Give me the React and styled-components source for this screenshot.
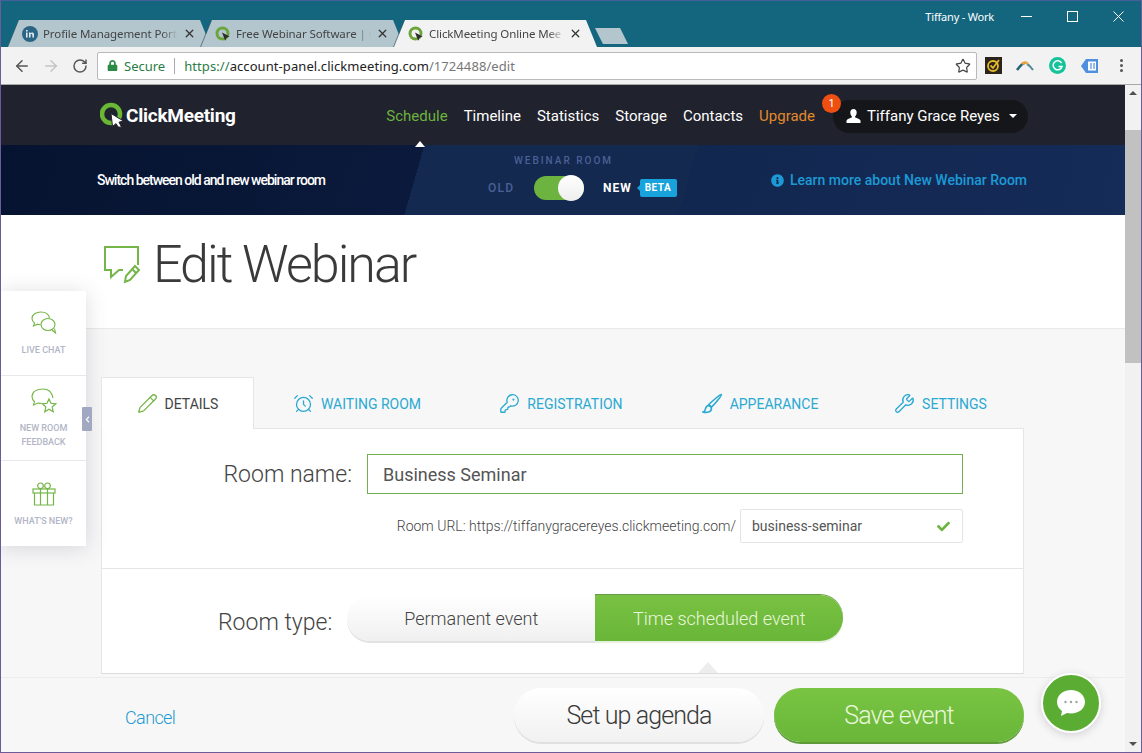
import styled, { createGlobalStyle } from 'styled-components';
import {
  Pencil,
  AlarmClock,
  KeyRound,
  Wrench,
  ArrowLeft,
  ArrowRight,
  RotateCw,
  Star,
  X,
} from 'lucide-react';
import { FaCheck, FaLock, FaInfoCircle, FaChevronLeft } from 'react-icons/fa';

const GlobalStyle = createGlobalStyle`
  html, body {
    margin: 0;
    padding: 0;
    background: #fff;
  }
  body {
    font-family: Roboto, "Liberation Sans", sans-serif;
  }
  * {
    box-sizing: border-box;
  }
`;

const BrushIcon = ({ size, color, strokeWidth }) => (
  <svg width={size} height={size} viewBox="0 0 20 20" fill="none" stroke={color} strokeWidth={strokeWidth}>
    <path d="M18.5 1.5c.8.8-7 9.5-9.5 12L6.5 11C9 8.5 17.7.7 18.5 1.5z" />
    <path d="M6 12c-2 0-2.5 2-3 4-.2 1-1.2 1.800-2 2 3 1 8 .5 8-3 0-1.500-1.500-3-3-3z" />
  </svg>
);

const TABS = [
  { id: 'linkedin', title: 'Profile Management Port' },
  { id: 'cm', title: 'Free Webinar Software | C' },
  { id: 'cm', title: 'ClickMeeting Online Mee', active: true },
];

const NAV = [
  { label: 'Schedule', color: '#6db33f' },
  { label: 'Timeline' },
  { label: 'Statistics' },
  { label: 'Storage' },
  { label: 'Contacts' },
  { label: 'Upgrade', color: '#e08a2c' },
];

const SECTIONS = [
  { label: 'DETAILS', icon: Pencil, width: 153, active: true },
  { label: 'WAITING ROOM', icon: AlarmClock, width: 206 },
  { label: 'REGISTRATION', icon: KeyRound, width: 202 },
  { label: 'APPEARANCE', icon: BrushIcon, width: 196 },
  { label: 'SETTINGS', icon: Wrench, width: 165 },
];

const CmFavicon = () => (
  <svg width="16" height="16" viewBox="0 0 16 16">
    <circle cx="7.5" cy="7.5" r="5.5" fill="none" stroke="#6ca53c" strokeWidth="3" />
    <path d="M7 6.5l7.5 4-3 1.2-1.2 3z" fill="#2c2c2c" />
  </svg>
);

const LinkedInFavicon = () => (
  <svg width="16" height="16" viewBox="0 0 16 16">
    <circle cx="8" cy="8" r="8" fill="#2c6485" />
    <rect x="4" y="6.5" width="1.6" height="5" fill="#dfe8ee" />
    <rect x="4" y="4" width="1.6" height="1.6" fill="#dfe8ee" />
    <path d="M7 6.5h1.5v.8c.8-1.2 3.5-1.3 3.5 1.2v3h-1.6V9c0-1.4-1.8-1.2-1.8 0v2.5H7z" fill="#dfe8ee" />
  </svg>
);

const LogoMark = () => (
  <svg width="25" height="27" viewBox="0 0 25 27">
    <circle cx="11" cy="12" r="9" fill="none" stroke="#69b735" strokeWidth="4.5" />
    <path d="M11 11.5l12.5 7.5-4.5 1.2 2.6 5-3.4-.2-2.2-3.400-3.500 2.800z" fill="#fff" stroke="#20222d" strokeWidth="1" />
  </svg>
);

const EditIcon = () => (
  <svg width="38" height="40" viewBox="0 0 38 40" fill="none" stroke="#74b648" strokeWidth="2">
    <path d="M35 20V2H2v23h6v7l8-7h4" />
    <path d="M22 37l1-6 9-10 4 4-9 10z" />
    <path d="M29 24l4 4" />
  </svg>
);

const ChatsIcon = () => (
  <svg width="26" height="24" viewBox="0 0 26 24" fill="none" stroke="#74b648" strokeWidth="1.1">
    <path d="M10 1c-5 0-9 2.6-9 6.5 0 2 1 3.5 2.5 4.5L2.5 15l4-1.8c1 .3 2 .4 3 .4" />
    <path d="M18.5 6.8C17.5 3 14 1 10 1" />
    <ellipse cx="17" cy="13.5" rx="7" ry="6" />
    <path d="M21 19l3.5 3-1-4.5" />
  </svg>
);

const FeedbackIcon = () => (
  <svg width="26" height="25" viewBox="0 0 26 25" fill="none" stroke="#74b648" strokeWidth="1.1">
    <path d="M12 1C6 1 1 3.5 1 8.5c0 2.5 1 4 2.5 5L2.5 17l4.5-2c1 .3 2 .5 3.5.5" />
    <path d="M22 10C21 4 17 1 12 1" />
    <path d="M18 11l2 4.3 4.7.5-3.5 3.2 1 4.7-4.200-2.400-4.200 2.400 1-4.700-3.500-3.200 4.700-.5z" strokeWidth="1.2" />
  </svg>
);

const GiftIcon = () => (
  <svg width="24" height="24" viewBox="0 0 24 24" fill="none" stroke="#74b648" strokeWidth="1.2">
    <rect x="1" y="7" width="22" height="4" />
    <path d="M2.5 11v12h19V11M8.5 7v16M15.5 7v16" />
    <circle cx="8.5" cy="3.8" r="2.8" />
    <circle cx="15.5" cy="3.8" r="2.8" />
  </svg>
);

const BubbleIcon = () => (
  <svg width="32" height="30" viewBox="0 0 32 30">
    <path d="M16 2C8 2 2 7 2 14c0 4 2 7 5 9l-1 5 6-3c1 .3 2.5.5 4 .5 8 0 14-5 14-11.5S24 2 16 2z" fill="#fff" />
    <circle cx="10.5" cy="14" r="1.2" fill="#9aa4a0" />
    <circle cx="16" cy="14" r="1.2" fill="#9aa4a0" />
    <circle cx="21.5" cy="14" r="1.2" fill="#9aa4a0" />
  </svg>
);

const UserIcon = () => (
  <svg width="15" height="14" viewBox="0 0 15 14">
    <path d="M7.5 0C5.5 0 4.3 1.5 4.3 3.5c0 1.5.6 3 1.5 3.8v1.3C4 9.5 1 10 .5 11.500V14h14v-2.500C14 10 11 9.500 9.200 8.600V7.300c.9-.8 1.500-2.300 1.500-3.800C10.700 1.500 9.500 0 7.500 0z" fill="#fff" />
  </svg>
);

const TargetExt = () => (
  <svg width="17" height="17" viewBox="0 0 17 17">
    <rect width="17" height="17" fill="#2b241a" />
    <circle cx="8" cy="9" r="5" fill="none" stroke="#e6b92c" strokeWidth="1.8" />
    <path d="M5.5 8.5l2.5 2.5 6-8" fill="none" stroke="#e6b92c" strokeWidth="1.8" />
  </svg>
);

const ArcExt = () => (
  <svg width="18" height="10" viewBox="0 0 18 10">
    <path d="M1 9C4 5 6 2 9 2" fill="none" stroke="#27607a" strokeWidth="2.5" />
    <path d="M11 3c2 1 4 3 6 6" fill="none" stroke="#4a8a9a" strokeWidth="2" />
    <path d="M6 3c2-2 4-2 6 0" fill="none" stroke="#e8a33a" strokeWidth="2.5" />
  </svg>
);

const GrammarlyExt = () => (
  <svg width="17" height="17" viewBox="0 0 17 17">
    <circle cx="8.5" cy="8.5" r="8.5" fill="#15c39a" />
    <path d="M12.5 6A4.5 4.5 0 1 0 13 9.5H9.5" fill="none" stroke="#fff" strokeWidth="1.5" />
  </svg>
);

const TagExt = () => (
  <svg width="17" height="14" viewBox="0 0 17 14">
    <path d="M5 0h12v14H5L0 7z" fill="#4f8fe0" />
    <rect x="7" y="2.5" width="8" height="9" fill="#fff" />
    <path d="M10 4v6M13 4v6" stroke="#4f8fe0" strokeWidth="1.2" />
  </svg>
);

const App = () => {
  return (
    <Window>
      <GlobalStyle />
      <TitleBar>
        <TabStrip>
          {TABS.map((tab) => (
            <TabSlot key={tab.title}>
              <Tab $active={tab.active}>
                {tab.id === 'linkedin' ? <LinkedInFavicon /> : <CmFavicon />}
                <TabTitle>{tab.title}</TabTitle>
                <X size={13} strokeWidth={2.4} color="#333" />
              </Tab>
            </TabSlot>
          ))}
          <NewTab />
        </TabStrip>
        <WindowControls>
          <Profile>Tiffany - Work</Profile>
          <ControlButton>
            <svg width="11" height="1"><rect width="11" height="1" fill="#fff" /></svg>
          </ControlButton>
          <ControlButton>
            <svg width="11" height="11"><rect x=".5" y=".5" width="10" height="10" fill="none" stroke="#fff" /></svg>
          </ControlButton>
          <ControlButton>
            <svg width="11" height="11"><path d="M.5.5l10 10M10.5.5l-10 10" stroke="#fff" /></svg>
          </ControlButton>
        </WindowControls>
      </TitleBar>

      <Toolbar>
        <NavIcon><ArrowLeft size={18} strokeWidth={2} color="#555" /></NavIcon>
        <NavIcon><ArrowRight size={18} strokeWidth={2} color="#c4c4c4" /></NavIcon>
        <NavIcon><RotateCw size={16} strokeWidth={2.2} color="#555" /></NavIcon>
        <Omnibox>
          <FaLock size={11} color="#2a8a46" />
          <SecureLabel>Secure</SecureLabel>
          <OmniDivider />
          <Url>
            <UrlScheme>https://</UrlScheme>account-panel.clickmeeting.com<UrlPath>/1724488/edit</UrlPath>
          </Url>
          <Star size={16} strokeWidth={1.8} color="#444" />
        </Omnibox>
        <Extensions>
          <Extension><TargetExt /></Extension>
          <Extension><ArcExt /></Extension>
          <Extension><GrammarlyExt /></Extension>
          <Extension><TagExt /></Extension>
          <Extension>
            <Dots><i /><i /><i /></Dots>
          </Extension>
        </Extensions>
      </Toolbar>

      <Viewport>
        <Page>
          <Header>
            <Logo>
              <LogoMark />
              <LogoText>ClickMeeting</LogoText>
            </Logo>
            <Nav>
              {NAV.map((item, i) => (
                <NavLink key={item.label} $color={item.color} $current={i === 0}>
                  {item.label}
                </NavLink>
              ))}
              <UserPill>
                <Badge>1</Badge>
                <UserIcon />
                <span>Tiffany Grace Reyes</span>
                <Caret />
              </UserPill>
            </Nav>
          </Header>

          <Banner>
            <BannerText>Switch between old and new webinar room</BannerText>
            <RoomSwitch>
              <RoomSwitchLabel>WEBINAR ROOM</RoomSwitchLabel>
              <RoomSwitchRow>
                <OldLabel>OLD</OldLabel>
                <Toggle><Knob /></Toggle>
                <NewLabel>NEW</NewLabel>
                <Beta>BETA</Beta>
              </RoomSwitchRow>
            </RoomSwitch>
            <LearnMore>
              <FaInfoCircle size={13} />
              Learn more about New Webinar Room
            </LearnMore>
          </Banner>

          <TitleSection>
            <EditIcon />
            <Title>Edit Webinar</Title>
          </TitleSection>

          <Body>
            <SectionTabs>
              {SECTIONS.map(({ label, icon: Icon, width, active }) => (
                <SectionTab key={label} $width={width} $active={active}>
                  <Icon size={21} strokeWidth={1.5} color={active ? '#74b648' : '#2aa9d2'} />
                  {label}
                </SectionTab>
              ))}
            </SectionTabs>
            <Card>
              <NameSection>
                <NameRow>
                  <FieldLabel>Room name:</FieldLabel>
                  <NameInput>Business Seminar</NameInput>
                </NameRow>
                <UrlRow>
                  <UrlPrefix>Room URL: https://tiffanygracereyes.clickmeeting.com/</UrlPrefix>
                  <SlugInput>
                    business-seminar
                    <FaCheck size={13} color="#6db33f" />
                  </SlugInput>
                </UrlRow>
              </NameSection>
              <TypeSection>
                <TypeLabel>Room type:</TypeLabel>
                <Segments>
                  <Segment>Permanent event</Segment>
                  <Segment $active>Time scheduled event</Segment>
                </Segments>
                <Pointer />
              </TypeSection>
            </Card>
          </Body>

          <SidePanel>
            <SideItem>
              <ChatsIcon />
              <SideLabel>LIVE CHAT</SideLabel>
            </SideItem>
            <SideItem>
              <FeedbackIcon />
              <SideLabel>NEW ROOM<br />FEEDBACK</SideLabel>
            </SideItem>
            <SideItem>
              <GiftIcon />
              <SideLabel>WHAT'S NEW?</SideLabel>
            </SideItem>
            <SideHandle><FaChevronLeft size={7} color="#fff" /></SideHandle>
          </SidePanel>

          <Footer>
            <CancelLink>Cancel</CancelLink>
            <FooterButtons>
              <AgendaButton>Set up agenda</AgendaButton>
              <SaveButton>Save event</SaveButton>
            </FooterButtons>
          </Footer>

          <ChatBubble><BubbleIcon /></ChatBubble>
        </Page>
        <Scrollbar>
          <ScrollArrow />
          <ScrollThumb />
          <ScrollArrow $down />
        </Scrollbar>
      </Viewport>
    </Window>
  );
};

const Window = styled.div`
  width: 1142px;
  height: 753px;
  display: flex;
  flex-direction: column;
  overflow: hidden;
  border: 1px solid #6d5a98;
  border-top-color: #44609a;
`;

const TitleBar = styled.div`
  height: 46px;
  flex: none;
  display: flex;
  justify-content: space-between;
  background: #14667f;
`;

const TabStrip = styled.div`
  display: flex;
  align-items: flex-end;
  padding-left: 7px;
`;

const TabSlot = styled.div`
  margin-right: -10px;
  filter: drop-shadow(-1px 0 0 rgba(50, 90, 105, 0.7));
`;

const Tab = styled.div`
  width: 203px;
  height: 27px;
  padding: 0 15px 0 14px;
  display: flex;
  align-items: center;
  gap: 5px;
  background: ${(p) => (p.$active ? '#f2f2f2' : '#b3c6cd')};
  clip-path: polygon(0 100%, 11px 0, calc(100% - 11px) 0, 100% 100%);
  font-family: 'Noto Sans', sans-serif;
  font-size: 11.5px;
  letter-spacing: -0.1px;
  color: #444;

  svg {
    flex: none;
  }
`;

const TabTitle = styled.span`
  flex: 1;
  overflow: hidden;
  white-space: nowrap;
  mask-image: linear-gradient(to right, #000 88%, transparent 100%);
`;

const NewTab = styled.div`
  width: 33px;
  height: 16px;
  margin: 0 0 3px 8px;
  background: #b3c6cd;
  clip-path: polygon(0 0, 76% 0, 100% 100%, 24% 100%);
`;

const WindowControls = styled.div`
  display: flex;
  align-items: center;
  height: 30px;
`;

const Profile = styled.div`
  margin-right: 9px;
  font-family: 'Noto Sans', sans-serif;
  font-size: 11px;
  color: #fff;
  letter-spacing: -0.2px;
`;

const ControlButton = styled.div`
  width: 46px;
  display: flex;
  justify-content: center;
`;

const Toolbar = styled.div`
  height: 38px;
  flex: none;
  display: flex;
  align-items: center;
  padding-left: 6px;
  background: #f2f2f2;
  border-bottom: 1px solid #a9a9a9;
`;

const NavIcon = styled.div`
  width: 29px;
  display: flex;
  justify-content: center;
`;

const Omnibox = styled.div`
  width: 880px;
  height: 28px;
  margin-left: 3px;
  padding: 0 5px 0 9px;
  display: flex;
  align-items: center;
  background: #fff;
  border: 1px solid #b9b9b9;
  border-radius: 2px;
  font-family: 'Noto Sans', sans-serif;
  font-size: 13px;
`;

const SecureLabel = styled.span`
  margin-left: 6px;
  color: #2a7d46;
`;

const OmniDivider = styled.span`
  width: 1px;
  height: 16px;
  margin: 0 9px;
  background: #aaa;
`;

const Url = styled.span`
  flex: 1;
  letter-spacing: 0.08px;
  color: #222;
`;

const UrlScheme = styled.span`
  color: #2a7d46;
`;

const UrlPath = styled.span`
  color: #777;
`;

const Extensions = styled.div`
  display: flex;
`;

const Extension = styled.div`
  width: 32px;
  display: flex;
  justify-content: center;
  align-items: center;
`;

const Dots = styled.div`
  display: flex;
  flex-direction: column;
  gap: 2px;

  i {
    width: 3px;
    height: 3px;
    border-radius: 50%;
    background: #555;
  }
`;

const Viewport = styled.div`
  flex: 1;
  min-height: 0;
  display: flex;
`;

const Page = styled.div`
  position: relative;
  flex: 1;
  min-width: 0;
  overflow: hidden;
  background: #f7f7f8;
`;

const Header = styled.div`
  height: 60px;
  padding: 0 97px 0 99px;
  display: flex;
  align-items: center;
  justify-content: space-between;
  background: #20222d;
`;

const Logo = styled.div`
  display: flex;
  align-items: center;
  gap: 1px;
`;

const LogoText = styled.div`
  font-size: 19px;
  font-weight: 700;
  letter-spacing: -0.25px;
  color: #fff;
`;

const Nav = styled.div`
  margin-top: 2px;
  display: flex;
  align-items: center;
`;

const NavLink = styled.div`
  position: relative;
  margin-right: 16px;
  font-size: 15px;
  color: ${(p) => p.$color || '#fff'};

  ${(p) =>
    p.$current &&
    `
    &::after {
      content: '';
      position: absolute;
      left: calc(50% + 3px);
      bottom: -22px;
      margin-left: -5px;
      border: 5px solid transparent;
      border-top: 0;
      border-bottom: 6px solid #fff;
    }
  `}
`;

const UserPill = styled.div`
  position: relative;
  width: 195px;
  height: 33px;
  margin-left: 2px;
  padding-left: 13px;
  display: flex;
  align-items: center;
  gap: 6px;
  border-radius: 17px;
  background: #151619;
  color: #fff;
  font-size: 15px;
`;

const Badge = styled.div`
  position: absolute;
  left: -11px;
  top: -6px;
  width: 19px;
  height: 19px;
  display: flex;
  align-items: center;
  justify-content: center;
  border-radius: 50%;
  background: #ef4f10;
  color: #fff;
  font-size: 11px;
`;

const Caret = styled.span`
  margin-left: 3px;
  border: 4px solid transparent;
  border-top: 4px solid #fff;
  border-bottom: 0;
`;

const Banner = styled.div`
  height: 70px;
  padding-left: 96px;
  display: grid;
  grid-template-columns: 391px 283px 1fr;
  align-items: center;
  background: linear-gradient(106deg, #061330 0, #0b1a3c 407px, #14294f 407px, #14294f 670px, #12274f 670px, #152b58 100%);
`;

const BannerText = styled.div`
  font-size: 14px;
  font-weight: 500;
  letter-spacing: -1px;
  color: #fff;
`;

const RoomSwitch = styled.div`
  padding-bottom: 6px;
  display: flex;
  flex-direction: column;
  gap: 10px;
`;

const RoomSwitchLabel = styled.div`
  padding-left: 26px;
  font-size: 10px;
  font-weight: 500;
  letter-spacing: 2px;
  color: #4a6096;
`;

const RoomSwitchRow = styled.div`
  display: flex;
  align-items: center;
`;

const OldLabel = styled.span`
  width: 46px;
  font-size: 12px;
  font-weight: 500;
  letter-spacing: 1.2px;
  color: #4a6096;
`;

const Toggle = styled.div`
  position: relative;
  width: 50px;
  height: 24px;
  border-radius: 12px;
  background: #6db33f;
`;

const Knob = styled.div`
  position: absolute;
  right: 0;
  top: -1px;
  width: 26px;
  height: 26px;
  border-radius: 50%;
  background: linear-gradient(#fff, #eee);
`;

const NewLabel = styled.span`
  margin-left: 19px;
  font-size: 12px;
  font-weight: 700;
  letter-spacing: 1px;
  color: #fff;
`;

const Beta = styled.span`
  position: relative;
  margin-left: 8px;
  padding: 0 5px;
  height: 18px;
  line-height: 17px;
  width: 37px;
  background: #19a3dd;
  border-radius: 2px;
  font-size: 10px;
  font-weight: 700;
  letter-spacing: 0.5px;
  color: #fff;

  &::before {
    content: '';
    position: absolute;
    left: -3px;
    top: 6px;
    border: 3px solid transparent;
    border-left: 0;
    border-right: 3px solid #19a3dd;
  }
`;

const LearnMore = styled.div`
  display: flex;
  align-items: center;
  gap: 6px;
  font-size: 14px;
  font-weight: 500;
  color: #1c9ad6;
`;

const TitleSection = styled.div`
  height: 114px;
  padding: 0 0 14px 102px;
  display: flex;
  align-items: center;
  gap: 12px;
  background: #fff;
  border-bottom: 1px solid #e9e9e9;
`;

const Title = styled.h1`
  margin: 0;
  font-size: 52px;
  font-weight: 300;
  letter-spacing: -2px;
  color: #3a3a3a;
`;

const Body = styled.div`
  padding: 48px 101px 0 100px;
`;

const SectionTabs = styled.div`
  display: flex;
`;

const SectionTab = styled.div`
  position: relative;
  z-index: 1;
  width: ${(p) => p.$width}px;
  height: 52px;
  padding-top: ${(p) => (p.$active ? '0' : '1px')};
  display: flex;
  align-items: center;
  justify-content: center;
  gap: 7px;
  font-size: 14px;
  color: ${(p) => (p.$active ? '#444' : '#2aa9d2')};
  background: ${(p) => (p.$active ? '#fff' : 'transparent')};
  border: ${(p) => (p.$active ? '1px solid #e6e6e6' : '0')};
  border-bottom: 0;
`;

const Card = styled.div`
  margin-top: -1px;
  background: #fff;
  border: 1px solid #e6e6e6;
  border-bottom: 0;
`;

const NameSection = styled.div`
  height: 140px;
  padding: 25px 60px 0 0;
  border-bottom: 1px solid #e6e6e6;
`;

const NameRow = styled.div`
  display: flex;
  align-items: center;
  justify-content: flex-end;
  gap: 15px;
`;

const FieldLabel = styled.div`
  font-size: 23px;
  font-weight: 300;
  color: #444;
`;

const NameInput = styled.div`
  width: 596px;
  height: 40px;
  padding-left: 15px;
  display: flex;
  align-items: center;
  border: 1px solid #74ad4c;
  font-size: 18px;
  color: #555;
`;

const UrlRow = styled.div`
  margin-top: 15px;
  display: flex;
  align-items: center;
  justify-content: flex-end;
  gap: 4px;
`;

const UrlPrefix = styled.div`
  font-size: 14px;
  font-weight: 300;
  color: #444;
`;

const SlugInput = styled.div`
  width: 223px;
  height: 34px;
  padding: 0 12px 0 11px;
  display: flex;
  align-items: center;
  justify-content: space-between;
  border: 1px solid #e4e4e4;
  border-radius: 2px;
  font-size: 14px;
  color: #555;
`;

const TypeSection = styled.div`
  position: relative;
  height: 105px;
  padding: 26px 0 0 116px;
  display: flex;
  align-items: flex-start;
  gap: 15px;
  border-bottom: 1px solid #dcdcdc;
`;

const TypeLabel = styled.div`
  padding-top: 14px;
  font-size: 23px;
  font-weight: 300;
  color: #444;
`;

const Segments = styled.div`
  display: flex;
`;

const Segment = styled.div`
  width: 248px;
  height: 46px;
  display: flex;
  align-items: center;
  justify-content: center;
  font-size: 18px;
  font-weight: 300;
  color: ${(p) => (p.$active ? '#eaf7dc' : '#444')};
  background: ${(p) => (p.$active ? 'linear-gradient(#79c142, #69b639)' : 'linear-gradient(#fff, #f0f0f0)')};
  border-radius: ${(p) => (p.$active ? '0 23px 23px 0' : '23px 0 0 23px')};
  box-shadow: ${(p) => (p.$active ? '0 -1px 0 #6a9a45, 0 2px 0 #e6f0de' : '0 2px 0 #e2e2e2')};
`;

const Pointer = styled.div`
  position: absolute;
  left: 596px;
  bottom: 0;
  width: 20px;
  height: 11px;
  background: #ededed;
  clip-path: polygon(50% 0, 100% 100%, 0 100%);
`;

const SidePanel = styled.div`
  position: absolute;
  left: 0;
  top: 206px;
  width: 85px;
  background: #fff;
  box-shadow: 0 2px 20px rgba(60, 60, 80, 0.18);
`;

const SideItem = styled.div`
  height: 85px;
  display: flex;
  flex-direction: column;
  align-items: center;
  justify-content: center;
  gap: 8px;
  border-bottom: 1px solid #e8e8ec;

  &:nth-child(odd) {
    padding-top: 2px;
  }

  &:nth-child(3) {
    border-bottom: 0;
  }
`;

const SideLabel = styled.div`
  font-size: 9px;
  font-weight: 500;
  line-height: 14px;
  text-align: center;
  color: #b2b5c6;
`;

const SideHandle = styled.div`
  position: absolute;
  right: -6px;
  top: 116px;
  width: 10px;
  height: 24px;
  display: flex;
  align-items: center;
  justify-content: center;
  border-radius: 1px;
  background: #a0a8c2;
`;

const Footer = styled.div`
  position: absolute;
  left: 0;
  right: 0;
  bottom: 0;
  height: 75px;
  padding: 0 101px 0 124px;
  display: flex;
  align-items: center;
  justify-content: space-between;
  background: #f7f7f7;
  border-top: 1px solid #ececec;
`;

const CancelLink = styled.div`
  margin-top: 5px;
  font-size: 18px;
  font-weight: 300;
  letter-spacing: -0.6px;
  color: #1f9ad0;
`;

const FooterButtons = styled.div`
  display: flex;
  gap: 10px;
`;

const FooterButton = styled.div`
  width: 250px;
  height: 54px;
  display: flex;
  align-items: center;
  justify-content: center;
  border-radius: 27px;
  font-size: 25px;
  font-weight: 300;
  letter-spacing: -0.9px;
`;

const AgendaButton = styled(FooterButton)`
  color: #3a3a3a;
  background: linear-gradient(#fff, #f1f1f1);
  box-shadow: 0 2px 0 #e0e0e0;
`;

const SaveButton = styled(FooterButton)`
  color: #eaf7dc;
  background: linear-gradient(#79c442, #69b639);
  box-shadow: 0 2px 0 #5f9a3a;
`;

const ChatBubble = styled.div`
  position: absolute;
  right: 24px;
  bottom: 19px;
  width: 60px;
  height: 60px;
  display: flex;
  align-items: center;
  justify-content: center;
  border-radius: 50%;
  background: #5aad32;
  border: 2px solid #fff;
  box-shadow: 0 2px 8px rgba(60, 60, 90, 0.2);
`;

const Scrollbar = styled.div`
  width: 16px;
  flex: none;
  display: flex;
  flex-direction: column;
  background: #f1f1f1;
`;

const ScrollArrow = styled.div`
  height: 16px;
  margin-top: ${(p) => (p.$down ? 'auto' : '0')};
  display: flex;
  align-items: center;
  justify-content: center;

  &::before {
    content: '';
    border: 4px solid transparent;
    ${(p) => (p.$down ? 'border-top: 4px solid #505050; border-bottom: 0;' : 'border-bottom: 4px solid #505050; border-top: 0;')}
  }
`;

const ScrollThumb = styled.div`
  height: 233px;
  margin-top: 29px;
  background: #c1c1c1;
`;

export default App;
